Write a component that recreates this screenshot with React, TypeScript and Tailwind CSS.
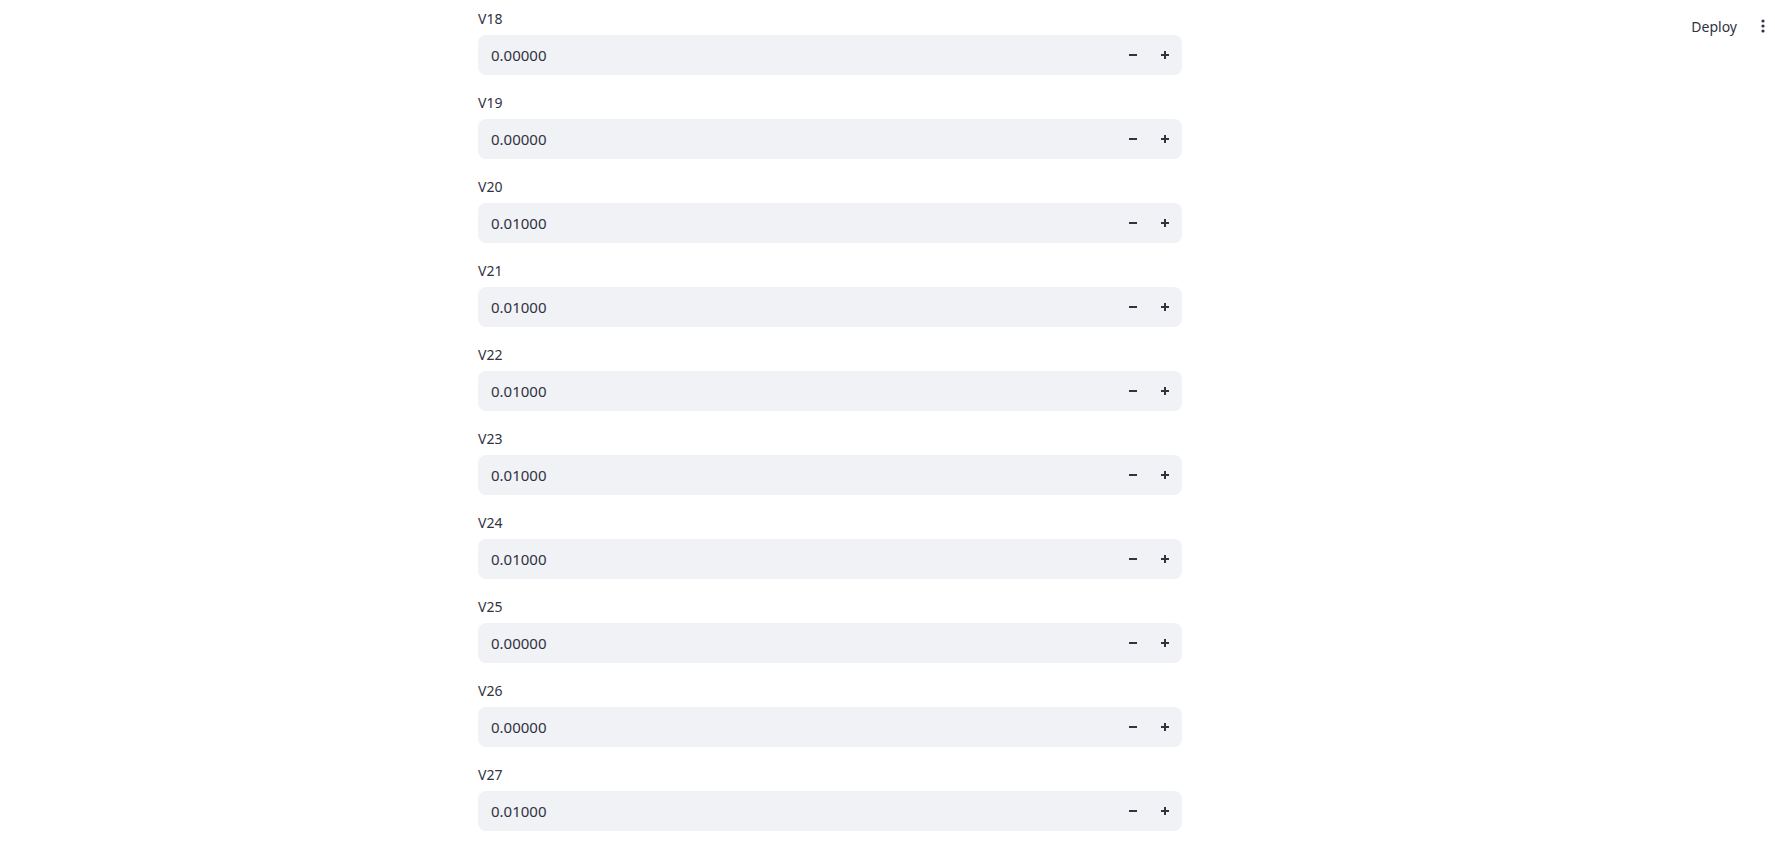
import React from "react";

const rows: [string, string][] = [
  ["V18", "0.00000"],
  ["V19", "0.00000"],
  ["V20", "0.01000"],
  ["V21", "0.01000"],
  ["V22", "0.01000"],
  ["V23", "0.01000"],
  ["V24", "0.01000"],
  ["V25", "0.00000"],
  ["V26", "0.00000"],
  ["V27", "0.01000"],
];

function Minus() {
  return (
    <svg width="10" height="10" viewBox="0 0 10 10">
      <rect x="1" y="4" width="8" height="2" fill="#31333F" />
    </svg>
  );
}
function Plus() {
  return (
    <svg width="10" height="10" viewBox="0 0 10 10">
      <rect x="1" y="4" width="8" height="2" fill="#31333F" />
      <rect x="4" y="1" width="2" height="8" fill="#31333F" />
    </svg>
  );
}

export default function App() {
  return (
    <div
      className="relative w-full h-[850px] overflow-hidden bg-white text-[#31333F]"
      style={{ fontFamily: '"Source Sans Pro", "Noto Sans", sans-serif' }}
    >
      <header className="absolute top-0 left-0 right-0 h-[52px] flex items-center justify-end pr-[2px]">
        <button className="text-[14px] text-[#31333F] pl-[10px] pr-[16px] h-[32px] flex items-center">Deploy</button>
        <button className="w-[20px] h-[32px] flex items-center justify-center">
          <svg width="4" height="14" viewBox="0 0 4 14">
            <circle cx="2" cy="2" r="1.6" fill="#31333F" />
            <circle cx="2" cy="7" r="1.6" fill="#31333F" />
            <circle cx="2" cy="12" r="1.6" fill="#31333F" />
          </svg>
        </button>
      </header>
      <main className="ml-[478px] w-[704px] pt-[7px] flex flex-col gap-[16px]">
        {rows.map(([label, value]) => (
          <div key={label} className="flex flex-col">
            <label className="h-[24px] mb-[4px] flex items-center text-[14px] leading-none">{label}</label>
            <div className="h-[40px] rounded-[8px] bg-[#F0F2F6] flex items-center">
              <span className="flex-1 pl-[13px] text-[15px]">{value}</span>
              <div className="flex items-center h-full pr-[1px]">
                <button className="w-[32px] h-full flex items-center justify-center">
                  <Minus />
                </button>
                <button className="w-[32px] h-full flex items-center justify-center">
                  <Plus />
                </button>
              </div>
            </div>
          </div>
        ))}
      </main>
    </div>
  );
}
